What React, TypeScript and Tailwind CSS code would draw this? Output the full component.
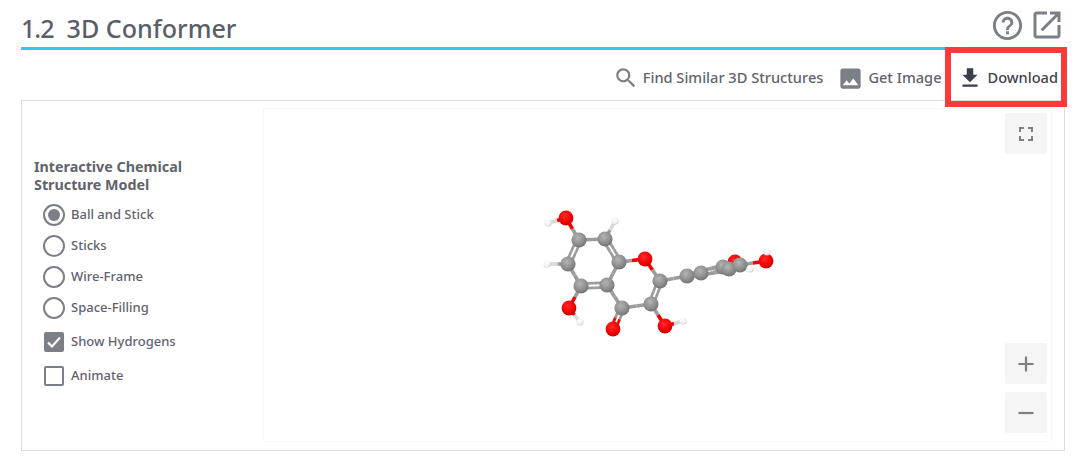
const atoms: Record<string, [number, number, "C" | "O" | "H"]> = {
  o1: [566, 218, "O"], h1: [548, 223, "H"], c1: [579, 240, "C"], c2: [605, 239, "C"], h2: [615, 221, "H"],
  c3: [619, 262, "C"], o2: [645, 259, "O"], c4: [607, 285, "C"], c5: [581, 286, "C"], c6: [568, 264, "C"],
  h3: [547, 264, "H"], o3: [569, 308, "O"], h4: [580, 322, "H"], c7: [622, 308, "C"], o4: [613, 329, "O"],
  c8: [651, 304, "C"], c9: [660, 281, "C"], o5: [665, 326, "O"], h5: [683, 321, "H"], c10: [687, 276, "C"],
  c11: [701, 273, "C"], c13: [723, 267, "C"], o7: [735, 262, "O"], c12: [729, 269, "C"], c14: [740, 265, "C"],
  h7: [750, 269, "H"], o6: [766, 261, "O"], h8: [767, 252, "H"],
};
const single = [
  ["o1", "h1"], ["o1", "c1"], ["c2", "h2"], ["c3", "o2"], ["c6", "h3"], ["c5", "o3"], ["o3", "h4"], ["c4", "c7"],
  ["c7", "c8"], ["o2", "c9"], ["c8", "o5"], ["o5", "h5"], ["c9", "c10"], ["c14", "o6"], ["o6", "h8"], ["c14", "h7"], ["c1", "c2"], ["c3", "c4"], ["c5", "c6"],
];
const double = [
  ["c1", "c6"], ["c2", "c3"], ["c4", "c5"], ["c7", "o4"], ["c8", "c9"], ["c10", "c11"], ["c11", "c13"], ["c11", "c12"], ["c12", "c14"], ["c13", "o7"],
];
const order = ["o7", "c13", "c10", "c11", "c12", "c14", "h7", "o6", "h8", "o1", "h1", "c1", "c2", "h2", "c3", "o2", "c4", "c5", "c6", "h3", "o3", "h4", "c7", "o4", "c8", "c9", "o5", "h5"];

function seg(a: string, b: string, off: number, mix: string, key: string) {
  const [x1, y1] = atoms[a];
  const [x2, y2] = atoms[b];
  const l = Math.hypot(x2 - x1, y2 - y1) || 1;
  const nx = (-(y2 - y1) / l) * off;
  const ny = ((x2 - x1) / l) * off;
  const col = (k: string) => {
    const t = atoms[k][2];
    return t === "O" ? "#f00000" : t === "H" ? "#d8d8d8" : "#9c9c9c";
  };
  const mx = (x1 + x2) / 2 + nx;
  const my = (y1 + y2) / 2 + ny;
  return (
    <g key={key + mix} strokeWidth={off === 0 ? 3.6 : 2.7}>
      <line x1={x1 + nx} y1={y1 + ny} x2={mx} y2={my} stroke={col(a)} />
      <line x1={mx} y1={my} x2={x2 + nx} y2={y2 + ny} stroke={col(b)} />
    </g>
  );
}

function Molecule() {
  return (
    <svg viewBox="264 109 787 332" className="block w-full h-full">
      <defs>
        <radialGradient id="gC" cx="42%" cy="35%" r="70%">
          <stop offset="0%" stopColor="#b4b4b4" />
          <stop offset="60%" stopColor="#8e8e8e" />
          <stop offset="100%" stopColor="#6e6e6e" />
        </radialGradient>
        <radialGradient id="gO" cx="42%" cy="35%" r="70%">
          <stop offset="0%" stopColor="#ff2a2a" />
          <stop offset="65%" stopColor="#f00000" />
          <stop offset="100%" stopColor="#c80000" />
        </radialGradient>
        <radialGradient id="gH" cx="42%" cy="35%" r="70%">
          <stop offset="0%" stopColor="#ffffff" />
          <stop offset="70%" stopColor="#eeeeee" />
          <stop offset="100%" stopColor="#bdbdbd" />
        </radialGradient>
      </defs>
      {single.map(([a, b]) => seg(a, b, 0, "s", a + b))}
      {double.map(([a, b]) => (
        <g key={a + b}>
          {seg(a, b, 2.3, "p", a + b)}
          {seg(a, b, -2.3, "n", a + b)}
        </g>
      ))}
      {order.map((k) => {
        const [x, y, t] = atoms[k];
        return <circle key={k} cx={x} cy={y} r={t === "H" ? 3.6 : t === "O" ? 7.4 : 7.6} fill={`url(#g${t})`} />;
      })}
    </svg>
  );
}

function Mi({ d, className }: { d: string; className: string }) {
  return (
    <svg viewBox="0 0 24 24" fill="currentColor" className={className}>
      <path d={d} />
    </svg>
  );
}

function Radio({ label, on }: { label: string; on?: boolean }) {
  return (
    <div className="flex h-[31px] items-center gap-[6px]">
      <span className="flex h-[22px] w-[22px] items-center justify-center rounded-full border-2 border-[#7b7f88]">
        {on && <span className="h-[12px] w-[12px] rounded-full bg-[#7b7f88]" />}
      </span>
      <span>{label}</span>
    </div>
  );
}

function Check({ label, on }: { label: string; on?: boolean }) {
  return (
    <div className="flex h-[34px] items-center gap-[7px] pl-px">
      <span className={`flex h-[20px] w-[20px] items-center justify-center rounded-[2px] border-2 border-[#7b7f88] ${on ? "bg-[#7b7f88]" : ""}`}>
        {on && (
          <svg viewBox="0 0 20 20" className="h-[20px] w-[20px] shrink-0" fill="none" stroke="#ffffff" strokeWidth="2.2">
            <path d="M4 10.5l4 4 8-9" />
          </svg>
        )}
      </span>
      <span>{label}</span>
    </div>
  );
}

const ctl = "flex h-[41px] w-[42px] items-center justify-center rounded-[2px] bg-[#f5f5f6] text-[#7b7f88]";

export default function App() {
  return (
    <div className="relative h-[464px] w-[1080px] overflow-hidden bg-white pl-[21px] pr-[15px] text-[#5f636d] [font-family:'Noto_Sans',sans-serif]">
      <div className="flex h-[50px] items-end justify-between border-b-[3px] border-[#2fcbee]">
        <h2 className="flex gap-[13px] text-[25.1px] leading-[38px] font-medium text-[#5a5e69]">
          <span className="tracking-[-1px]">1.2</span>
          <span>3D Conformer</span>
        </h2>
        <div className="mb-[4px] flex items-center gap-[4px] text-[#7b7f88]">
          <Mi className="h-[35px] w-[35px]" d="M11 18h2v-2h-2v2zm1-16C6.48 2 2 6.48 2 12s4.48 10 10 10 10-4.48 10-10S17.52 2 12 2zm0 18c-4.41 0-8-3.59-8-8s3.59-8 8-8 8 3.59 8 8-3.59 8-8 8zm0-14c-2.21 0-4 1.79-4 4h2c0-1.1.9-2 2-2s2 .9 2 2c0 2-3 1.75-3 5h2c0-2.25 3-2.5 3-5 0-2.21-1.79-4-4-4z" />
          <Mi className="h-[36px] w-[36px]" d="M19 19H5V5h7V3H5c-1.11 0-2 .9-2 2v14c0 1.1.89 2 2 2h14c1.1 0 2-.9 2-2v-7h-2v7zM14 3v2h3.59l-9.83 9.83 1.41 1.41L19 6.41V10h2V3h-7z" />
        </div>
      </div>
      <div className="flex h-[50px] items-center justify-end pr-[7px] pt-[6px] text-[14.6px] font-medium">
        <Mi className="mr-[4px] h-[26px] w-[26px] text-[#7b7f88]" d="M15.5 14h-.79l-.28-.27C15.41 12.59 16 11.11 16 9.5 16 5.91 13.09 3 9.5 3S3 5.91 3 9.5 5.91 16 9.5 16c1.61 0 3.09-.59 4.23-1.57l.27.28v.79l5 4.99L20.49 19l-4.99-5zm-6 0C7.01 14 5 11.99 5 9.5S7.01 5 9.5 5 14 7.01 14 9.5 11.99 14 9.5 14z" />
        <span>Find Similar 3D Structures</span>
        <Mi className="ml-[14px] mr-[4px] h-[27px] w-[27px] text-[#7b7f88]" d="M21 19V5c0-1.1-.9-2-2-2H5c-1.1 0-2 .9-2 2v14c0 1.1.9 2 2 2h14c1.1 0 2-.9 2-2zM8.5 13.5l2.5 3.01L14.5 12l4.5 6H5l3.5-4.5z" />
        <span>Get Image</span>
        <Mi className="ml-[15px] mr-[5px] h-[26px] w-[26px] text-[#3a3f4b]" d="M19 9h-4V3H9v6H5l7 7 7-7zM5 18v2h14v-2H5z" />
        <span className="text-[#3f434d]">Download</span>
      </div>
      <div className="flex h-[351px] border border-[#dcdcdc] pb-[8px] pl-[12px] pr-[12px] pt-[7px]">
        <div className="w-[229px] shrink-0 pt-[50px] text-[13px] font-medium">
          <div className="mb-[5px] text-[14.3px] leading-[18px] font-bold">Interactive Chemical<br />Structure Model</div>
          <div className="pl-[9px]">
            <Radio label="Ball and Stick" on />
            <Radio label="Sticks" />
            <Radio label="Wire-Frame" />
            <Radio label="Space-Filling" />
            <div className="h-[2px]" />
            <Check label="Show Hydrogens" on />
            <Check label="Animate" />
          </div>
        </div>
        <div className="relative flex-1 border border-dotted border-[#f1f1f1]">
          <Molecule />
          <div className={`absolute right-[4px] top-[4px] ${ctl}`}>
            <Mi className="h-[24px] w-[24px]" d="M7 14H5v5h5v-2H7v-3zm-2-4h2V7h3V5H5v5zm12 7h-3v2h5v-5h-2v3zM14 5v2h3v3h2V5h-5z" />
          </div>
          <div className="absolute bottom-[8px] right-[4px] flex flex-col gap-[8px]">
            <div className={ctl}>
              <Mi className="h-[26px] w-[26px]" d="M19 13h-6v6h-2v-6H5v-2h6V5h2v6h6v2z" />
            </div>
            <div className={ctl}>
              <Mi className="h-[26px] w-[26px]" d="M19 13H5v-2h14v2z" />
            </div>
          </div>
        </div>
      </div>
      <div className="pointer-events-none absolute left-[945px] top-[47px] h-[60px] w-[122px] border-[6px] border-[#fb3a3a]" />
    </div>
  );
}
